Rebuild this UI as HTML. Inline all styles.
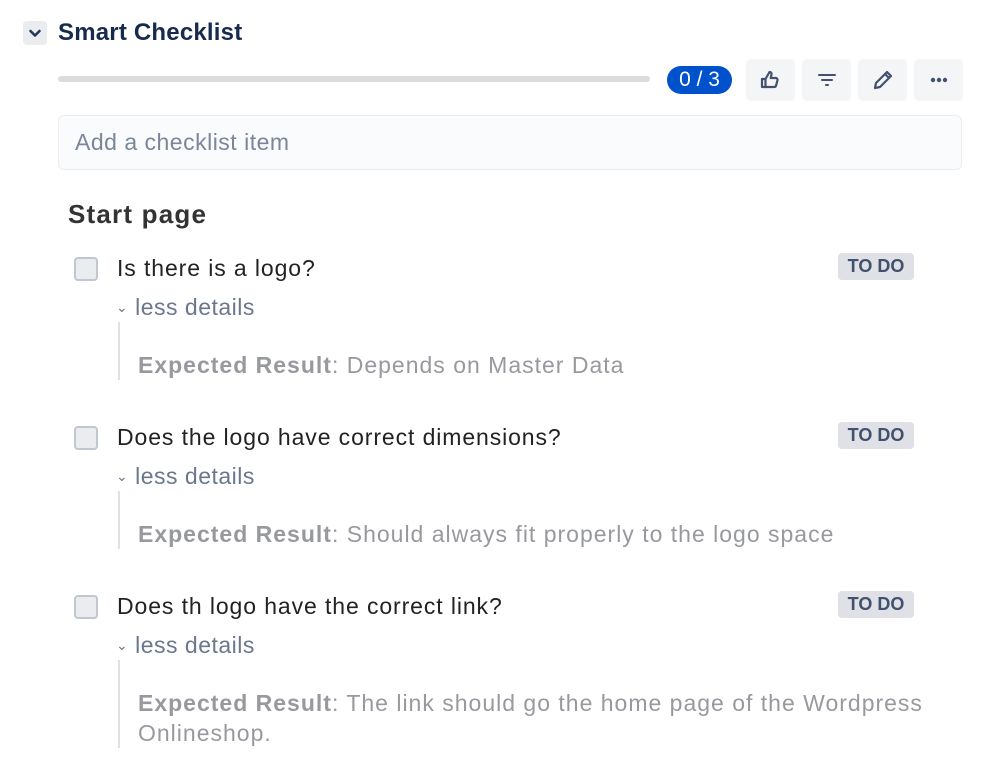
<html><head><style>
body{margin:0;width:999px;height:779px;background:#fff;font-family:"Liberation Sans",Arial,sans-serif;position:relative;overflow:hidden}
.a{position:absolute}
.btn{position:absolute;top:59px;width:49px;height:42px;background:#F4F5F7;border-radius:5px;display:flex;align-items:center;justify-content:center}
.cb{position:absolute;left:74px;width:20px;height:20px;border:2px solid #C1C7D0;background:#EBECF0;border-radius:4px}
.t{position:absolute;left:117px;font-size:23px;letter-spacing:0.9px;color:#222;line-height:26px}
.todo{position:absolute;left:838px;width:76px;height:27px;background:#DFE1E6;border-radius:4px;color:#42526E;font-weight:bold;font-size:18px;line-height:27px;text-align:center}
.ld{position:absolute;left:116px;font-size:23px;letter-spacing:0.5px;color:#6B778C;line-height:26px}
.ln{position:absolute;left:118px;width:2px;background:#DFE1E6}
.er{position:absolute;left:138px;font-size:23px;letter-spacing:1px;color:#97999E;line-height:30px;width:810px}
.er b{color:#97999E}
</style></head><body>
<div class="a" style="left:23px;top:21px;width:24px;height:24px;background:#EBECF0;border-radius:4px"><svg width="24" height="24"><path d="M7.5 10l4.5 4.5 4.5-4.5" stroke="#253858" stroke-width="2.6" fill="none" stroke-linecap="round" stroke-linejoin="round"/></svg></div>
<div class="a" style="left:58px;top:18px;font-size:24px;font-weight:bold;color:#172B4D;line-height:30px;letter-spacing:0.2px">Smart Checklist</div>
<div class="a" style="left:58px;top:76px;width:592px;height:6px;background:#DCDCDC;border-radius:3px"></div>
<div class="a" style="left:667px;top:66px;width:65px;height:28px;background:#0052CC;border-radius:14px;color:#fff;font-size:21px;line-height:28px;text-align:center">0 / 3</div>
<div class="btn" style="left:746px"><svg width="26" height="26" fill="none" stroke="#42526E" stroke-width="2.2" stroke-linejoin="round"><path d="M4 12h3.5v8H4z"/><path d="M7.5 12l4-7c1.6 0 2.3 1.2 2 2.5l-.8 3.5h5c1.3 0 2.1 1 1.8 2.2l-1.4 5.3c-.3 1-1 1.5-2 1.5H7.5"/></svg></div>
<div class="btn" style="left:802px"><svg width="24" height="24" stroke="#42526E" stroke-width="2" stroke-linecap="round"><path d="M4 7h16M7 12h10M11 17h2"/></svg></div>
<div class="btn" style="left:858px"><svg width="26" height="26" fill="none" stroke="#42526E" stroke-width="2.2" stroke-linejoin="round"><path d="M5 21l1-5L17 5l4 4L10 20z M15 7l4 4"/></svg></div>
<div class="btn" style="left:914px"><svg width="24" height="24" fill="#42526E"><circle cx="6" cy="12" r="2.2"/><circle cx="12" cy="12" r="2.2"/><circle cx="18" cy="12" r="2.2"/></svg></div>
<div class="a" style="left:58px;top:115px;width:902px;height:53px;background:#FAFBFC;border:1px solid #EBECF0;border-radius:6px"></div>
<div class="a" style="left:75px;top:129px;font-size:23px;letter-spacing:0.5px;color:#7A869A;line-height:26px">Add a checklist item</div>
<div class="a" style="left:68px;top:199px;font-size:26px;letter-spacing:1.2px;font-weight:bold;color:#333;line-height:30px">Start page</div>

<div class="cb" style="top:257px"></div><div class="t" style="top:255px">Is there is a logo?</div><div class="todo" style="top:253px">TO DO</div>
<div class="ld" style="top:294px"><span style="font-size:14px;vertical-align:3px">&#8964;</span> less details</div>
<div class="ln" style="top:322px;height:58px"></div>
<div class="er" style="top:350px"><b>Expected Result</b>: Depends on Master Data</div>

<div class="cb" style="top:426px"></div><div class="t" style="top:424px">Does the logo have correct dimensions?</div><div class="todo" style="top:422px">TO DO</div>
<div class="ld" style="top:463px"><span style="font-size:14px;vertical-align:3px">&#8964;</span> less details</div>
<div class="ln" style="top:491px;height:58px"></div>
<div class="er" style="top:519px"><b>Expected Result</b>: Should always fit properly to the logo space</div>

<div class="cb" style="top:595px"></div><div class="t" style="top:593px">Does th logo have the correct link?</div><div class="todo" style="top:591px">TO DO</div>
<div class="ld" style="top:632px"><span style="font-size:14px;vertical-align:3px">&#8964;</span> less details</div>
<div class="ln" style="top:660px;height:88px"></div>
<div class="er" style="top:688px"><b>Expected Result</b>: The link should go the home page of the Wordpress Onlineshop.</div>
</body></html>
